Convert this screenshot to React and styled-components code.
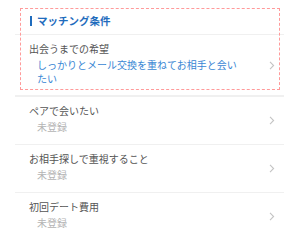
import React from 'react';
import styled, { createGlobalStyle } from 'styled-components';

const GlobalStyle = createGlobalStyle`
  body {
    margin: 0;
    background: #ffffff;
    font-family: "Noto Sans CJK JP", "Noto Sans", sans-serif;
  }
`;

const Page = styled.div`
  padding: 0 16px 0 15px;
`;

const Section = styled.div`
  position: relative;
`;

const Highlight = styled.div`
  position: absolute;
  left: 5px;
  right: 4px;
  top: 8px;
  height: 80px;
  border: 1px dashed #ff9a9a;
  pointer-events: none;
`;

const Header = styled.div`
  display: flex;
  align-items: center;
  height: 26px;
  padding: 8px 0 0 15px;
  border-bottom: 1px solid #f0f0f0;
  box-sizing: content-box;
`;

const HeaderTitle = styled.span`
  border-left: 2px solid #1f6cbd;
  padding-left: 5px;
  line-height: 10px;
  font-size: 10.5px;
  font-weight: bold;
  color: #1f6cbd;
`;

const Row = styled.div`
  display: flex;
  align-items: center;
  height: ${p => (p.$tall ? '62px' : '48px')};
  padding: 0 9px 0 14px;
  border-bottom: ${p => (p.$thick ? '2px' : '1px')} solid #f0f0f0;
  box-sizing: border-box;
`;

const Body = styled.div`
  flex: 1;
  align-self: flex-start;
  display: flex;
  flex-direction: column;
  gap: 2px;
  padding: 7px 24px 0 0;
`;

const Label = styled.div`
  font-size: 10px;
  line-height: 14px;
  color: #555555;
`;

const Value = styled.div`
  padding-left: 8px;
  font-size: 10px;
  line-height: 14px;
  color: ${p => (p.$empty ? '#b4b4b4' : '#3a87d4')};
`;

const Chevron = () => (
  <svg width="6" height="9" viewBox="0 0 6 9" fill="none">
    <path d="M1 0.8 L4.6 4.5 L1 8.2" stroke="#c4c4c4" strokeWidth="1.1" />
  </svg>
);

const items = [
  { label: 'ペアで会いたい' },
  { label: 'お相手探しで重視すること' },
  { label: '初回デート費用' },
];

export default function App() {
  return (
    <Page>
      <GlobalStyle />
      <Section>
        <Header>
          <HeaderTitle>マッチング条件</HeaderTitle>
        </Header>
        <Row $tall $thick>
          <Body>
            <Label>出会うまでの希望</Label>
            <Value>しっかりとメール交換を重ねてお相手と会いたい</Value>
          </Body>
          <Chevron />
        </Row>
        <Highlight />
      </Section>
      {items.map(item => (
        <Row key={item.label}>
          <Body>
            <Label>{item.label}</Label>
            <Value $empty>未登録</Value>
          </Body>
          <Chevron />
        </Row>
      ))}
    </Page>
  );
}
